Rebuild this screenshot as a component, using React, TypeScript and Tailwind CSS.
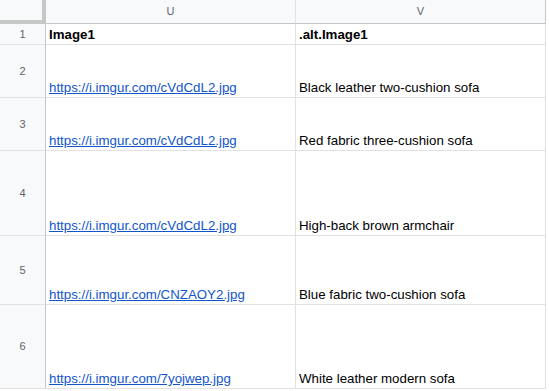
import React from "react";

const rows = [
  { n: "1", h: 20, u: "Image1", v: ".alt.Image1", header: true },
  { n: "2", h: 52, u: "https://i.imgur.com/cVdCdL2.jpg", v: "Black leather two-cushion sofa" },
  { n: "3", h: 52, u: "https://i.imgur.com/cVdCdL2.jpg", v: "Red fabric three-cushion sofa" },
  { n: "4", h: 84, u: "https://i.imgur.com/cVdCdL2.jpg", v: "High-back brown armchair" },
  { n: "5", h: 68, u: "https://i.imgur.com/CNZAOY2.jpg", v: "Blue fabric two-cushion sofa" },
  { n: "6", h: 83, u: "https://i.imgur.com/7yojwep.jpg", v: "White leather modern sofa" },
];

export default function App() {
  return (
    <div
      className="w-[549px] h-[391px] overflow-hidden bg-white text-black"
      style={{ fontFamily: '"Liberation Sans", Arial, sans-serif' }}
    >
      {/* header row */}
      <div className="flex h-[24px]">
        <div className="w-[46px] shrink-0 bg-[#f8f9fa] border-r-[4px] border-b-[4px] border-[#c4c7c5]" />
        <div className="w-[250px] shrink-0 bg-[#f8f9fa] border-r border-b border-r-[#e1e1e1] border-b-[#c4c7c5] flex items-center justify-center text-[11px] text-[#5f6368]">
          U
        </div>
        <div className="w-[250px] shrink-0 bg-[#f8f9fa] border-r border-b border-r-[#c4c7c5] border-b-[#c4c7c5] flex items-center justify-center text-[11px] text-[#5f6368]">
          V
        </div>
        <div className="flex-1 bg-white" />
      </div>
      {rows.map((r) => (
        <div key={r.n} className="flex">
          <div
            className="w-[46px] shrink-0 bg-[#f8f9fa] border-r border-r-[#c4c7c5] border-b border-b-[#e1e1e1] flex items-center justify-center text-[11px] text-[#5f6368]"
            style={{ height: r.h + 1 }}
          >
            {r.n}
          </div>
          <div
            className="w-[250px] shrink-0 border-r border-b border-[#e1e1e1] flex items-end px-[3px] pb-[1px] text-[13.3px] leading-[17px]"
            style={{ height: r.h + 1 }}
          >
            {r.header ? (
              <span className="font-bold">{r.u}</span>
            ) : (
              <span className="text-[#1155cc] underline">{r.u}</span>
            )}
          </div>
          <div
            className="w-[250px] shrink-0 border-r border-b border-[#e1e1e1] flex items-end px-[3px] pb-[1px] text-[13.3px] leading-[17px]"
            style={{ height: r.h + 1 }}
          >
            <span className={r.header ? "font-bold" : ""}>{r.v}</span>
          </div>
          <div className="flex-1 bg-white" />
        </div>
      ))}
    </div>
  );
}
